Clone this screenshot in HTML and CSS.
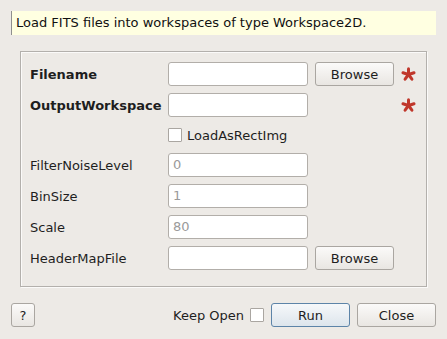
FILE: index.html
```html
<!DOCTYPE html>
<html>
<head>
<meta charset="utf-8">
<link rel="stylesheet" href="styles.css">
</head>
<body>
<div class="dialog">
  <div class="desc">Load FITS files into workspaces of type Workspace2D.</div>
  <div class="group">
    <div class="grid">
      <label class="lbl bold">Filename</label>
      <div class="input"></div>
      <button class="btn">Browse</button>
      <svg class="star" viewBox="-8 -8 16 16" width="15" height="15"><g stroke="#c0372b" stroke-width="3.2" stroke-linecap="round"><line x1="0" y1="0" x2="0" y2="-6.2"/><line x1="0" y1="0" x2="0" y2="-6.2" transform="rotate(72)"/><line x1="0" y1="0" x2="0" y2="-6.2" transform="rotate(144)"/><line x1="0" y1="0" x2="0" y2="-6.2" transform="rotate(216)"/><line x1="0" y1="0" x2="0" y2="-6.2" transform="rotate(288)"/></g></svg>

      <label class="lbl bold">OutputWorkspace</label>
      <div class="input"></div>
      <div></div>
      <svg class="star" viewBox="-8 -8 16 16" width="15" height="15"><g stroke="#c0372b" stroke-width="3.2" stroke-linecap="round"><line x1="0" y1="0" x2="0" y2="-6.2"/><line x1="0" y1="0" x2="0" y2="-6.2" transform="rotate(72)"/><line x1="0" y1="0" x2="0" y2="-6.2" transform="rotate(144)"/><line x1="0" y1="0" x2="0" y2="-6.2" transform="rotate(216)"/><line x1="0" y1="0" x2="0" y2="-6.2" transform="rotate(288)"/></g></svg>

      <div></div>
      <div class="check-row"><span class="box"></span><span>LoadAsRectImg</span></div>
      <div></div>
      <div></div>

      <label class="lbl">FilterNoiseLevel</label>
      <div class="input ph">0</div>
      <div></div>
      <div></div>

      <label class="lbl">BinSize</label>
      <div class="input ph">1</div>
      <div></div>
      <div></div>

      <label class="lbl">Scale</label>
      <div class="input ph">80</div>
      <div></div>
      <div></div>

      <label class="lbl">HeaderMapFile</label>
      <div class="input"></div>
      <button class="btn">Browse</button>
      <div></div>
    </div>
  </div>
  <div class="footer">
    <button class="btn help">?</button>
    <div class="spacer"></div>
    <span class="keep">Keep Open</span>
    <span class="box"></span>
    <button class="btn run">Run</button>
    <button class="btn close">Close</button>
  </div>
</div>
</body>
</html>
```
FILE: styles.css
```css
html, body {
  margin: 0;
  padding: 0;
  background: #edeae6;
}
body {
  width: 447px;
  height: 339px;
  font-family: "DejaVu Sans", sans-serif;
  font-size: 13px;
  color: #1e1e1e;
}
.dialog {
  padding: 11px 11px 0 11px;
}
.desc {
  height: 24px;
  box-sizing: border-box;
  background: #ffffe1;
  border-left: 1px solid #8f8f8f;
  padding-left: 4px;
  line-height: 24px;
  color: #111;
}
.group {
  margin: 16px 9px 0 9px;
  height: 236px;
  box-sizing: border-box;
  border: 1px solid #b3b0ac;
  box-shadow: 1px 1px 0 #fbfaf9, inset 1px 1px 0 #fbfaf9;
  padding: 10px 0 0 9px;
}
.grid {
  display: grid;
  grid-template-columns: 131px 140px 79px 30px;
  grid-template-rows: 24px 24px 22px 24px 24px 24px 24px;
  column-gap: 7px;
  row-gap: 7px;
  align-items: center;
}
.lbl {
  white-space: nowrap;
}
.bold {
  font-weight: bold;
}
.input {
  height: 24px;
  box-sizing: border-box;
  background: #fff;
  border: 1px solid #b2aea9;
  border-radius: 3px;
  padding-left: 4px;
  line-height: 22px;
}
.ph {
  color: #9a9a9a;
}
.btn {
  font-family: "DejaVu Sans", sans-serif;
  font-size: 13px;
  color: #1e1e1e;
  height: 24px;
  box-sizing: border-box;
  border: 1px solid #aaa6a1;
  border-radius: 3px;
  background: linear-gradient(#fbfaf9, #e9e6e2);
  padding: 0;
  width: 79px;
}
.star {
  margin-left: 0;
  justify-self: start;
  display: block;
}
.check-row {
  display: flex;
  align-items: center;
  gap: 5px;
}
.box {
  display: inline-block;
  width: 14px;
  height: 14px;
  box-sizing: border-box;
  border: 1px solid #aaa6a1;
  background: #fff;
  border-radius: 1px;
}
.footer {
  display: flex;
  align-items: center;
  margin-top: 16px;
  height: 24px;
}
.footer .help {
  width: 24px;
}
.spacer {
  flex: 1;
}
.keep {
  margin-right: 6px;
}
.run {
  margin-left: 7px;
  border-color: #5d84a8;
  background: linear-gradient(#f6f8fa, #dde5ec);
}
.close {
  margin-left: 7px;
}
```
